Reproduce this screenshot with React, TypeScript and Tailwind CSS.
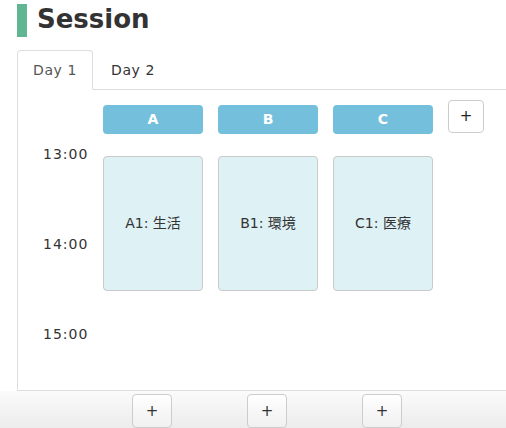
const columns = [
  { id: 'A', sessions: [{ label: 'A1: 生活' }] },
  { id: 'B', sessions: [{ label: 'B1: 環境' }] },
  { id: 'C', sessions: [{ label: 'C1: 医療' }] },
];

const times = ['13:00', '14:00', '15:00'];

export default function App() {
  return (
    <div
      className="w-[506px] h-[428px] overflow-hidden bg-white text-[#333] flex flex-col"
      style={{ fontFamily: '"DejaVu Sans", "Noto Sans CJK JP", sans-serif' }}
    >
      <div className="pl-[17px] w-[620px]">
        {/* Title */}
        <h1 className="mt-[4px] h-[33px] border-l-[10px] border-[#62b592] pl-[10px] text-[26px] font-bold leading-[30px] text-[#333]">
          Session
        </h1>

        {/* Tabs */}
        <div className="mt-[13px] flex border-b border-[#ddd]">
          <button className="-mb-px mr-[2px] rounded-t-[4px] border border-[#ddd] border-b-white bg-white px-[15px] py-[9px] text-[14px] leading-5 tracking-[0.6px] text-[#555]">
            Day 1
          </button>
          <button className="-mb-px mr-[2px] rounded-t-[4px] border border-transparent px-[15px] py-[9px] text-[14px] leading-5 tracking-[0.6px] text-[#333]">
            Day 2
          </button>
        </div>

        {/* Timetable panel */}
        <div className="flex h-[301px] border-l border-b border-r border-[#ddd]">
          <div className="w-[85px] pt-[54px] pl-[25px]">
            {times.map((t) => (
              <div key={t} className="h-[90px] text-[14px] leading-5 tracking-[1px] text-[#333]">
                {t}
              </div>
            ))}
          </div>
          <div className="flex items-start gap-[15px] pt-[10px]">
            {columns.map((col) => (
              <div key={col.id} className="flex w-[100px] flex-col">
                <div className="mt-[5px] flex h-[29px] items-center justify-center rounded-[4px] bg-[#73bfdc] text-[14px] font-bold text-white">
                  {col.id}
                </div>
                {col.sessions.map((s) => (
                  <div
                    key={s.label}
                    className="mt-[22px] flex h-[135px] items-center justify-center rounded-[4px] border border-[#cacaca] bg-[#def1f5] text-[14px] text-[#333]"
                  >
                    {s.label}
                  </div>
                ))}
              </div>
            ))}
            <button className="flex h-[33px] w-[36px] items-center justify-center rounded-[4px] border border-[#ccc] bg-white text-[15px] text-[#222]">
              +
            </button>
          </div>
        </div>
      </div>

      {/* Footer add buttons */}
      <div className="flex-1 bg-gradient-to-b from-[#fbfbfb] to-[#ececec] pt-[3px] pl-[103px]">
        <div className="flex gap-[15px]">
          {columns.map((col) => (
            <div key={col.id} className="w-[100px]">
              <button className="ml-[29px] flex h-[34px] w-[40px] items-center justify-center rounded-[4px] border border-[#ccc] bg-gradient-to-b from-white to-[#f0f0f0] text-[15px] text-[#333]">
                +
              </button>
            </div>
          ))}
        </div>
      </div>
    </div>
  );
}
